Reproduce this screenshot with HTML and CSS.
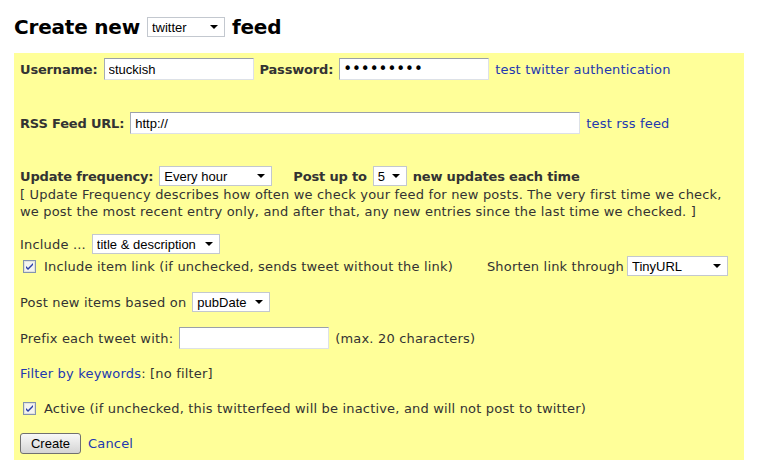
FILE: index.html
```html
<!DOCTYPE html>
<html>
<head>
    <meta content="text/html; charset=UTF-8" http-equiv="content-type">
    <title>Create new feed - twitterfeed</title>
    <link rel="stylesheet" href="styles.css">
</head>
<body>
    <h1 class="title">
        <span>Create new</span>
        <span class="pick"><select class="sel sel-type"><option>twitter</option></select></span>
        <span>feed</span>
    </h1>

    <form class="feed-form" action="#">
        <div class="row row-user">
            <b>Username:</b>
            <input type="text" class="txt txt-short" value="stuckish">
            <b>Password:</b>
            <input type="password" class="txt txt-short txt-pass" value="secret123">
            <a href="#">test twitter authentication</a>
        </div>

        <div class="row row-rss">
            <b>RSS Feed URL:</b>
            <input type="text" class="txt txt-url" value="http://">
            <a href="#">test rss feed</a>
        </div>

        <div class="row row-freq">
            <b>Update frequency:</b>
            <span class="pick"><select class="sel sel-freq"><option>Every hour</option></select></span>
            <b class="post-up">Post up to</b>
            <span class="pick"><select class="sel sel-count"><option>5</option></select></span>
            <b>new updates each time</b>
        </div>
        <p class="note">[ Update Frequency describes how often we check your feed for new posts. The very first time we check, we post the most recent entry only, and after that, any new entries since the last time we checked. ]</p>

        <div class="row row-include">
            <span>Include ...</span>
            <span class="pick"><select class="sel sel-include"><option>title &amp; description</option></select></span>
        </div>

        <div class="row row-link">
            <label class="check">
                <svg width="13" height="13" viewBox="0 0 13 13">
                    <rect x="0.5" y="0.5" width="12" height="12" fill="#f4f4f0" stroke="#8393b0"/>
                    <rect x="1.5" y="1.5" width="10" height="10" fill="none" stroke="#e2e2dc"/>
                    <path d="M3 6 L5 8 L10 3 L10 5 L5 10 L3 8 Z" fill="#2a3fa8"/>
                </svg>
                <span>Include item link (if unchecked, sends tweet without the link)</span>
            </label>
            <span class="shorten">Shorten link through</span>
            <span class="pick pick-short"><select class="sel sel-short"><option>TinyURL</option></select></span>
        </div>

        <div class="row row-based">
            <span>Post new items based on</span>
            <span class="pick"><select class="sel sel-based"><option>pubDate</option></select></span>
        </div>

        <div class="row row-prefix">
            <span>Prefix each tweet with:</span>
            <input type="text" class="txt txt-short" value="">
            <span>(max. 20 characters)</span>
        </div>

        <div class="row row-filter">
            <span><a href="#">Filter by keywords</a>: [no filter]</span>
        </div>

        <div class="row row-active">
            <label class="check">
                <svg width="13" height="13" viewBox="0 0 13 13">
                    <rect x="0.5" y="0.5" width="12" height="12" fill="#f4f4f0" stroke="#8393b0"/>
                    <rect x="1.5" y="1.5" width="10" height="10" fill="none" stroke="#e2e2dc"/>
                    <path d="M3 6 L5 8 L10 3 L10 5 L5 10 L3 8 Z" fill="#2a3fa8"/>
                </svg>
                <span>Active (if unchecked, this twitterfeed will be inactive, and will not post to twitter)</span>
            </label>
        </div>

        <div class="row row-submit">
            <button type="button" class="btn">Create</button>
            <a href="#">Cancel</a>
        </div>
    </form>
</body>
</html>
```

FILE: styles.css
```css
body {
    color: #333;
    background-color: #fff;
    font-family: "DejaVu Sans", Verdana, sans-serif;
    font-size: 13px;
    letter-spacing: 0.18px;
    margin: 0;
    padding: 0 18px 0 14px;
}

a {
    color: #2238b0;
    text-decoration: none;
}

b {
    letter-spacing: -0.18px;
}

/* heading with the feed type picker */
.title {
    display: flex;
    align-items: center;
    gap: 7px;
    margin: 0;
    padding-top: 14px;
    height: 26px;
    color: #000;
    font-size: 20px;
    font-weight: bold;
    letter-spacing: -0.2px;
}

/* yellow form box */
.feed-form {
    background-color: #ffff99;
    margin-top: 13px;
    padding: 5px 6px 7px 6px;
}

.row {
    display: flex;
    align-items: center;
    gap: 6px;
    height: 20px;
    white-space: nowrap;
}

.row-user,
.row-rss,
.row-prefix {
    height: 22px;
}

.row-rss,
.row-freq {
    margin-top: 32px;
}

.row-include {
    margin-top: 14px;
}

.row-link {
    margin-top: 2px;
}

.row-based {
    margin-top: 16px;
}

.row-prefix,
.row-active,
.row-submit {
    margin-top: 15px;
}

.row-filter {
    margin-top: 14px;
}

.post-up {
    margin-left: 15px;
}

.note {
    margin: 0;
    line-height: 17px;
}

/* form controls */
.txt {
    box-sizing: border-box;
    height: 22px;
    margin: 0;
    padding: 1px 4px 0 4px;
    border: 1px solid #a5acb5;
    border-top-color: #9aa0aa;
    border-right-color: #dde1e7;
    border-bottom-color: #dde1e7;
    background: #fff;
    color: #000;
    font-family: "Liberation Sans", Arial, sans-serif;
    font-size: 13px;
    letter-spacing: 0;
}

.txt-short {
    width: 150px;
}

.txt-url {
    width: 450px;
}

.txt-pass {
    padding: 0 3px;
    font-family: "DejaVu Sans", sans-serif;
    font-size: 15px;
}

.pick {
    position: relative;
    display: inline-flex;
    height: 20px;
    font-size: 13px;
    letter-spacing: 0;
}

.pick::after {
    content: "";
    position: absolute;
    right: 7px;
    top: 8px;
    border-left: 4px solid transparent;
    border-right: 4px solid transparent;
    border-top: 4px solid #000;
    pointer-events: none;
}

.sel {
    appearance: none;
    -webkit-appearance: none;
    box-sizing: border-box;
    height: 20px;
    margin: 0;
    padding: 0 0 0 4px;
    border: 1px solid #c3c8cf;
    border-radius: 0;
    background: #fff;
    color: #000;
    font-family: "Liberation Sans", Arial, sans-serif;
    font-size: 13px;
}

.sel-type { width: 78px; }
.sel-freq { width: 113px; }
.sel-count { width: 34px; }
.sel-include { width: 128px; }
.sel-short { width: 101px; }
.sel-based { width: 78px; }

.pick-short {
    margin-left: -3px;
}

.check {
    display: flex;
    align-items: center;
    gap: 8px;
    padding-left: 3px;
}

.check svg {
    display: block;
}

.shorten {
    margin-left: 28px;
}

/* XP style button */
.btn {
    box-sizing: border-box;
    width: 61px;
    height: 21px;
    margin: 0;
    padding: 0;
    border: 1px solid #707070;
    border-radius: 3px;
    background: linear-gradient(#f8f8f8, #e6e6e6 50%, #d4d4d4);
    color: #000;
    font-family: "Liberation Sans", Arial, sans-serif;
    font-size: 13px;
}

.row-submit {
    gap: 7px;
}
```
